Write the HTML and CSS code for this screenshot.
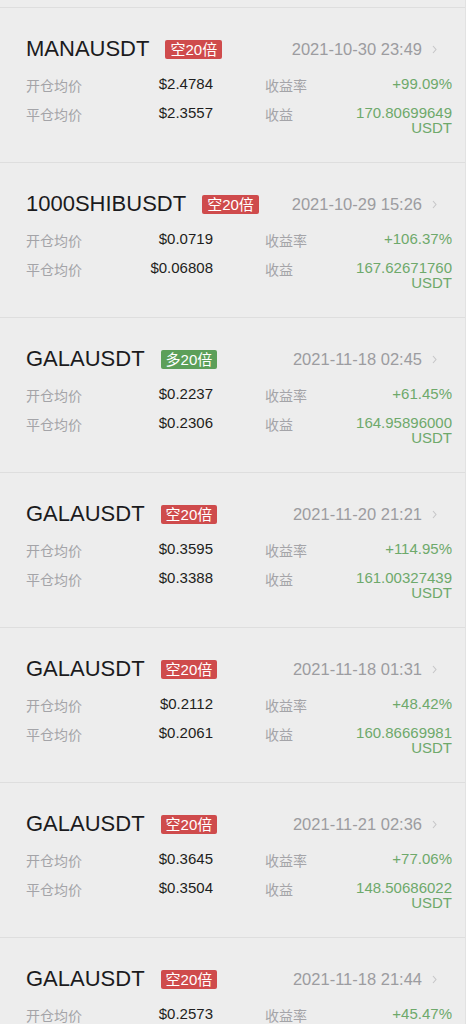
FILE: index.html
```html
<!DOCTYPE html>
<html>
  <head>
    <meta charset="utf-8">
    <title>历史仓位</title>
    <link rel="stylesheet" href="styles.css">
  </head>
  <body>
    <div class="list">
      <div class="topStrip"></div>

      <div class="card">
        <div class="titleRow">
          <span class="symbol">MANAUSDT</span>
          <span class="badge short">空20倍</span>
          <span class="date">2021-10-30 23:49</span>
          <svg class="chevron" width="5" height="9" viewBox="0 0 5 9"><polyline points="1,1 4,4.5 1,8"/></svg>
        </div>
        <div class="stats">
          <div class="half"><span class="label">开仓均价</span><span class="value">$2.4784</span></div>
          <div class="half"><span class="label">收益率</span><span class="value green">+99.09%</span></div>
          <div class="half"><span class="label">平仓均价</span><span class="value">$2.3557</span></div>
          <div class="half"><span class="label">收益</span><span class="value green">170.80699649<br>USDT</span></div>
        </div>
      </div>

      <div class="card">
        <div class="titleRow">
          <span class="symbol">1000SHIBUSDT</span>
          <span class="badge short">空20倍</span>
          <span class="date">2021-10-29 15:26</span>
          <svg class="chevron" width="5" height="9" viewBox="0 0 5 9"><polyline points="1,1 4,4.5 1,8"/></svg>
        </div>
        <div class="stats">
          <div class="half"><span class="label">开仓均价</span><span class="value">$0.0719</span></div>
          <div class="half"><span class="label">收益率</span><span class="value green">+106.37%</span></div>
          <div class="half"><span class="label">平仓均价</span><span class="value">$0.06808</span></div>
          <div class="half"><span class="label">收益</span><span class="value green">167.62671760<br>USDT</span></div>
        </div>
      </div>

      <div class="card">
        <div class="titleRow">
          <span class="symbol">GALAUSDT</span>
          <span class="badge long">多20倍</span>
          <span class="date">2021-11-18 02:45</span>
          <svg class="chevron" width="5" height="9" viewBox="0 0 5 9"><polyline points="1,1 4,4.5 1,8"/></svg>
        </div>
        <div class="stats">
          <div class="half"><span class="label">开仓均价</span><span class="value">$0.2237</span></div>
          <div class="half"><span class="label">收益率</span><span class="value green">+61.45%</span></div>
          <div class="half"><span class="label">平仓均价</span><span class="value">$0.2306</span></div>
          <div class="half"><span class="label">收益</span><span class="value green">164.95896000<br>USDT</span></div>
        </div>
      </div>

      <div class="card">
        <div class="titleRow">
          <span class="symbol">GALAUSDT</span>
          <span class="badge short">空20倍</span>
          <span class="date">2021-11-20 21:21</span>
          <svg class="chevron" width="5" height="9" viewBox="0 0 5 9"><polyline points="1,1 4,4.5 1,8"/></svg>
        </div>
        <div class="stats">
          <div class="half"><span class="label">开仓均价</span><span class="value">$0.3595</span></div>
          <div class="half"><span class="label">收益率</span><span class="value green">+114.95%</span></div>
          <div class="half"><span class="label">平仓均价</span><span class="value">$0.3388</span></div>
          <div class="half"><span class="label">收益</span><span class="value green">161.00327439<br>USDT</span></div>
        </div>
      </div>

      <div class="card">
        <div class="titleRow">
          <span class="symbol">GALAUSDT</span>
          <span class="badge short">空20倍</span>
          <span class="date">2021-11-18 01:31</span>
          <svg class="chevron" width="5" height="9" viewBox="0 0 5 9"><polyline points="1,1 4,4.5 1,8"/></svg>
        </div>
        <div class="stats">
          <div class="half"><span class="label">开仓均价</span><span class="value">$0.2112</span></div>
          <div class="half"><span class="label">收益率</span><span class="value green">+48.42%</span></div>
          <div class="half"><span class="label">平仓均价</span><span class="value">$0.2061</span></div>
          <div class="half"><span class="label">收益</span><span class="value green">160.86669981<br>USDT</span></div>
        </div>
      </div>

      <div class="card">
        <div class="titleRow">
          <span class="symbol">GALAUSDT</span>
          <span class="badge short">空20倍</span>
          <span class="date">2021-11-21 02:36</span>
          <svg class="chevron" width="5" height="9" viewBox="0 0 5 9"><polyline points="1,1 4,4.5 1,8"/></svg>
        </div>
        <div class="stats">
          <div class="half"><span class="label">开仓均价</span><span class="value">$0.3645</span></div>
          <div class="half"><span class="label">收益率</span><span class="value green">+77.06%</span></div>
          <div class="half"><span class="label">平仓均价</span><span class="value">$0.3504</span></div>
          <div class="half"><span class="label">收益</span><span class="value green">148.50686022<br>USDT</span></div>
        </div>
      </div>

      <div class="card">
        <div class="titleRow">
          <span class="symbol">GALAUSDT</span>
          <span class="badge short">空20倍</span>
          <span class="date">2021-11-18 21:44</span>
          <svg class="chevron" width="5" height="9" viewBox="0 0 5 9"><polyline points="1,1 4,4.5 1,8"/></svg>
        </div>
        <div class="stats">
          <div class="half"><span class="label">开仓均价</span><span class="value">$0.2573</span></div>
          <div class="half"><span class="label">收益率</span><span class="value green">+45.47%</span></div>
        </div>
      </div>
    </div>
  </body>
</html>
```

FILE: styles.css
```css
*{
  box-sizing: border-box;
}

body{
  margin: 0;
  background: #ededed;
  font-family: "Liberation Sans", "Noto Sans CJK SC", sans-serif;
  overflow: hidden;
}

.list{
  width: 466px;
  height: 1024px;
  overflow: hidden;
  border-right: 1px solid #e2e2e2;
}

.topStrip{
  height: 8px;
  border-bottom: 1px solid #dedede;
}

.card{
  height: 155px;
  padding: 28px 14px 0 26px;
  border-bottom: 1px solid #dedede;
}

.titleRow{
  display: flex;
  align-items: center;
  height: 26px;
  padding-right: 14px;
}

.symbol{
  font-size: 22px;
  line-height: 26px;
  color: #1b1b1d;
}

.badge{
  margin-left: 16px;
  padding: 0 5px;
  height: 19px;
  line-height: 19px;
  font-size: 15px;
  color: #ffffff;
  border-radius: 2px;
}

.short{
  background: #cf4b4c;
}

.long{
  background: #5c9f59;
}

.date{
  margin-left: auto;
  font-size: 16.5px;
  color: #9c9ca0;
}

.chevron{
  margin-left: 10px;
  fill: none;
  stroke: #c6c6c8;
  stroke-width: 1.1;
}

.stats{
  display: grid;
  grid-template-columns: 187px 187px;
  column-gap: 52px;
  row-gap: 12px;
  margin-top: 14px;
}

.half{
  display: flex;
  justify-content: space-between;
  align-items: flex-start;
}

.label{
  padding-top: 2px;
  font-family: "Noto Sans CJK SC", sans-serif;
  font-size: 14px;
  line-height: 15px;
  color: #a4a4a8;
}

.value{
  font-size: 15px;
  line-height: 15px;
  text-align: right;
  color: #1e1e20;
}

.green{
  color: #6ea96b;
}
```
